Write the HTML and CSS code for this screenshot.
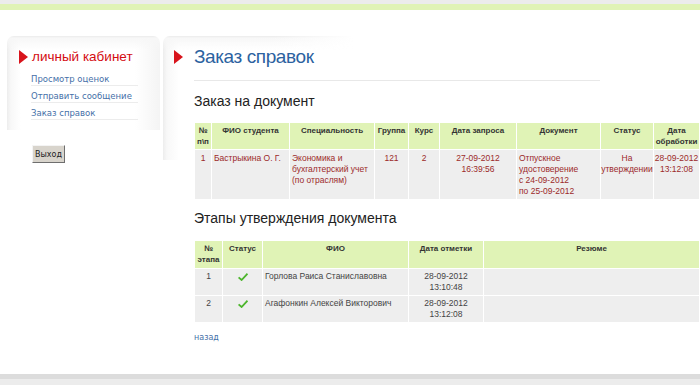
FILE: index.html
```html
<!DOCTYPE html>
<html lang="ru">
<head>
  <meta charset="UTF-8">
  <title>Заказ справок</title>
  <link rel="stylesheet" href="styles.css">
</head>
<body>
  <!-- top bars -->
  <div class="top-gray"></div>
  <div class="top-green"></div>

  <div class="page">
    <!-- left column: personal cabinet menu -->
    <aside class="sidebar">
      <div class="side-panel">
        <h2 class="side-title">
          <svg class="arrow" width="9" height="14" viewBox="0 0 9 14"><polygon points="0,0 9,7 0,14" fill="#d8141c"/></svg>
          <span>личный кабинет</span>
        </h2>
        <ul class="side-menu">
          <li><a href="#">Просмотр оценок</a></li>
          <li><a href="#">Отправить сообщение</a></li>
          <li><a href="#">Заказ справок</a></li>
        </ul>
      </div>
      <button class="exit-btn">Выход</button>
    </aside>

    <!-- main column -->
    <main class="main">
      <h1 class="main-title">
        <svg class="arrow" width="9" height="14" viewBox="0 0 9 14"><polygon points="0,0 9,7 0,14" fill="#d8141c"/></svg>
        <span>Заказ справок</span>
      </h1>

      <div class="content">
        <hr class="title-rule">

        <h3 class="section-title">Заказ на документ</h3>
        <table class="grid order">
          <colgroup>
            <col style="width:16px"><col style="width:77px"><col style="width:84px"><col style="width:33px"><col style="width:30px"><col style="width:76px"><col style="width:83px"><col style="width:52px"><col style="width:45px">
          </colgroup>
          <thead>
            <tr>
              <th>№<br>п\п</th>
              <th>ФИО студента</th>
              <th>Специальность</th>
              <th>Группа</th>
              <th>Курс</th>
              <th>Дата запроса</th>
              <th>Документ</th>
              <th>Статус</th>
              <th>Дата<br>обработки</th>
            </tr>
          </thead>
          <tbody>
            <tr>
              <td class="c">1</td>
              <td>Бастрыкина О. Г.</td>
              <td>Экономика и<br>бухгалтерский учет<br>(по отраслям)</td>
              <td class="c">121</td>
              <td class="c">2</td>
              <td class="c">27-09-2012<br>16:39:56</td>
              <td>Отпускное<br>удостоверение<br>с 24-09-2012<br>по 25-09-2012</td>
              <td class="c">На<br>утверждении</td>
              <td class="c">28-09-2012<br>13:12:08</td>
            </tr>
          </tbody>
        </table>

        <h3 class="section-title second">Этапы утверждения документа</h3>
        <table class="grid stages">
          <colgroup>
            <col style="width:27px"><col style="width:39px"><col style="width:145px"><col style="width:74px"><col style="width:215px">
          </colgroup>
          <thead>
            <tr>
              <th>№<br>этапа</th>
              <th>Статус</th>
              <th>ФИО</th>
              <th>Дата отметки</th>
              <th>Резюме</th>
            </tr>
          </thead>
          <tbody>
            <tr>
              <td class="c">1</td>
              <td class="c"><svg class="tick" width="10" height="8" viewBox="0 0 10 8"><path d="M0.6 4.3 L3.6 7 L9.5 0.7" fill="none" stroke="#4cb52c" stroke-width="1.8"/></svg></td>
              <td>Горлова Раиса Станиславовна</td>
              <td class="c">28-09-2012<br>13:10:48</td>
              <td></td>
            </tr>
            <tr>
              <td class="c">2</td>
              <td class="c"><svg class="tick" width="10" height="8" viewBox="0 0 10 8"><path d="M0.6 4.3 L3.6 7 L9.5 0.7" fill="none" stroke="#4cb52c" stroke-width="1.8"/></svg></td>
              <td>Агафонкин Алексей Викторович</td>
              <td class="c">28-09-2012<br>13:12:08</td>
              <td></td>
            </tr>
          </tbody>
        </table>

        <a class="back" href="#">назад</a>
      </div>
    </main>
  </div>

  <div class="bottom-bar"></div>
</body>
</html>
```

FILE: styles.css
```css
html, body {
  overflow: hidden;
}
body {
  margin: 0;
  height: 385px;
  position: relative;
  background: #fff;
  font-family: 'Liberation Sans', Arial, sans-serif;
  color: #333;
}
.top-gray {
  height: 4px;
  background: #ececec;
}
.top-green {
  height: 6px;
  background: #e0f3b6;
}
.page {
  display: flex;
  padding-top: 26px;
}
/* sidebar */
.sidebar {
  width: 153px;
  margin-left: 7px;
  flex-shrink: 0;
}
.side-panel {
  box-sizing: border-box;
  height: 94px;
  padding-top: 13px;
  border-radius: 7px 7px 0 0;
  background:
    linear-gradient(to bottom, #ebebeb 0, #f7f7f7 2px, rgba(255,255,255,0) 14px),
    linear-gradient(to right, #ededed 0, #f8f8f8 4px, #fff 14px, #fff 128px, #f4f4f4 153px);
}
.side-title {
  display: flex;
  align-items: center;
  margin: 0 0 0 12px;
  font-weight: normal;
  font-size: 13.5px;
  color: #d40d12;
  line-height: 16px;
}
.side-title span {
  margin-left: 4px;
}
.side-menu {
  list-style: none;
  margin: 4px 0 0 24px;
  padding: 0;
  width: 107px;
}
.side-menu li {
  border-bottom: 1px solid #ececec;
  height: 16px;
  line-height: 16px;
}
.side-menu a {
  color: #4570a8;
  text-decoration: none;
  font-size: 8.5px;
  font-family: 'DejaVu Sans', sans-serif;
}
.exit-btn {
  margin: 15px 0 0 25px;
  padding: 0 2px;
  height: 18px;
  font-family: 'DejaVu Sans', sans-serif;
  font-size: 8px;
  color: #222;
  background: #d8d4cc;
  border: 1px solid;
  border-color: #f4f4f4 #6e6e6e #6e6e6e #f4f4f4;
}
/* main */
.main {
  margin-left: 3px;
  flex: 1;
  min-width: 0;
  padding-top: 10px;
  border-radius: 7px 0 0 0;
  background:
    linear-gradient(to right, rgba(255,255,255,0) 110px, #fff 190px) no-repeat 0 0 / 190px 14px,
    linear-gradient(to bottom, #ebebeb 0, #f7f7f7 2px, rgba(255,255,255,0) 14px) no-repeat 0 0 / 190px 14px,
    linear-gradient(to right, #ededed 0, #f8f8f8 4px, #fff 16px) no-repeat 0 0 / 16px 124px;
}
.main-title {
  display: flex;
  align-items: center;
  margin: 0 0 0 11px;
  font-weight: normal;
  font-size: 19px;
  color: #2c62a0;
  font-family: 'Liberation Sans', Arial, sans-serif;
  letter-spacing: -0.4px;
  line-height: 22px;
}
.main-title span {
  margin-left: 11px;
}
.content {
  margin: 12px 0 0 31px;
  width: 506px;
}
.title-rule {
  border: 0;
  border-top: 1px solid #e8e8e8;
  margin: 0;
  width: 406px;
}
.section-title {
  margin: 12px 0 0 0;
  font-weight: normal;
  font-size: 14px;
  font-family: 'Liberation Sans', Arial, sans-serif;
  color: #222;
  line-height: 17px;
}
.section-title.second {
  margin-top: 10px;
}
.grid {
  margin: 12px 0 0 0;
  border-collapse: separate;
  border-spacing: 1px;
  table-layout: fixed;
  width: 506px;
  font-family: 'Liberation Sans', Arial, sans-serif;
  font-size: 8.5px;
  line-height: 11px;
}
.grid th {
  background: #e0f3b6;
  color: #333;
  font-size: 8px;
  font-weight: bold;
  vertical-align: top;
  padding: 2px 0;
  white-space: nowrap;
  overflow: hidden;
}
.grid td {
  background: #eeeeee;
  vertical-align: top;
  padding: 3px 2px 2px 2px;
  white-space: nowrap;
}
.grid td.c {
  text-align: center;
  padding-left: 0;
  padding-right: 0;
}
.order th {
  height: 22px;
}
.order td {
  color: #9c2a2a;
  height: 44px;
}
.stages {
  margin-top: 13px;
}
.stages th {
  height: 23px;
}
.stages td {
  color: #444;
  height: 22px;
  padding-top: 2px;
}
.tick {
  display: block;
  margin: 2px auto 0;
}
.back {
  display: inline-block;
  margin-top: 10px;
  font-family: 'DejaVu Sans', sans-serif;
  font-size: 8px;
  color: #4570a8;
  text-decoration: none;
}
.bottom-bar {
  position: absolute;
  left: 0;
  right: 0;
  bottom: 0;
  height: 11px;
  background: linear-gradient(#dcdcdc 0, #dcdcdc 5px, #ececec 5px);
}
```
